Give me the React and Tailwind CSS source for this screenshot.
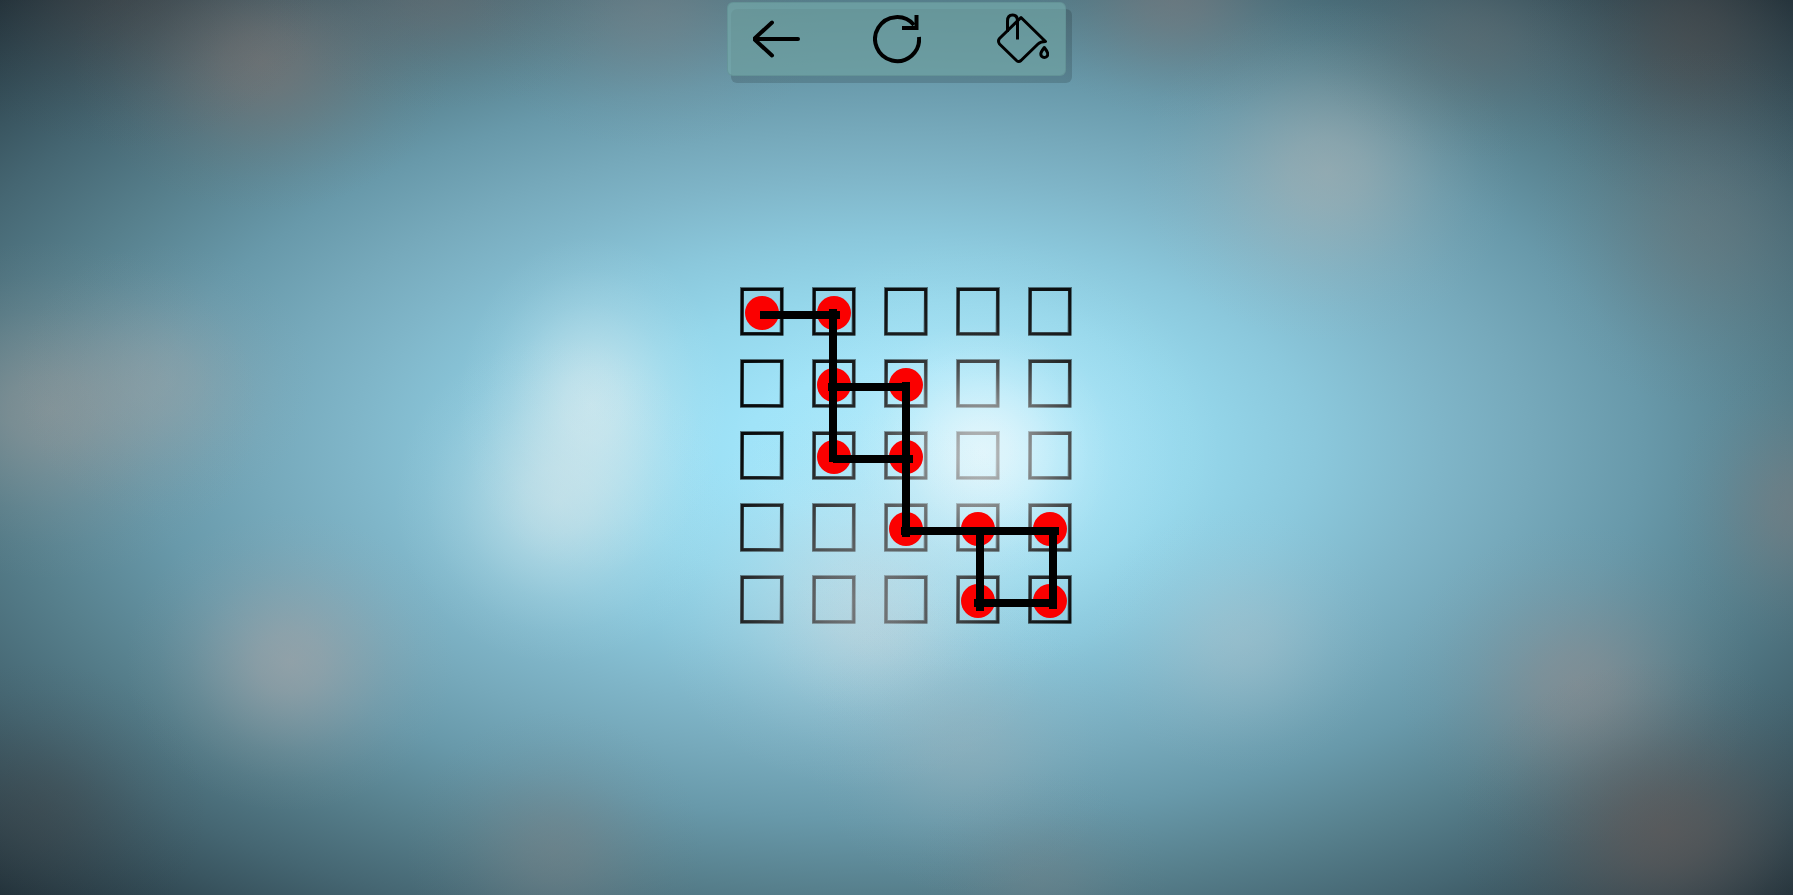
const SIZE = 5;

const GLOWS = [
  { x: 592, y: 405, rx: 135, ry: 170, color: '#e2eef0', a: 0.62 },
  { x: 558, y: 500, rx: 165, ry: 165, color: '#dce8ea', a: 0.56 },
  { x: 983, y: 452, rx: 130, ry: 130, color: '#ffffff', a: 0.6 },
  { x: 975, y: 460, rx: 250, ry: 230, color: '#f0f8fa', a: 0.36 },
  { x: 860, y: 600, rx: 210, ry: 190, color: '#d4dade', a: 0.48 },
  { x: 875, y: 640, rx: 110, ry: 90, color: '#d0d0d2', a: 0.16 },
  { x: 1327, y: 172, rx: 190, ry: 170, color: '#b4b4b2', a: 0.5 },
  { x: 50, y: 410, rx: 210, ry: 170, color: '#a09c9a', a: 0.55 },
  { x: 165, y: 382, rx: 150, ry: 140, color: '#a8a8a8', a: 0.36 },
  { x: 290, y: 662, rx: 165, ry: 150, color: '#aea6a6', a: 0.57 },
  { x: 262, y: 62, rx: 190, ry: 150, color: '#867874', a: 0.56 },
  { x: 120, y: 0, rx: 200, ry: 150, color: '#564c4a', a: 0.35 },
  { x: 440, y: 0, rx: 180, ry: 110, color: '#787070', a: 0.4 },
  { x: 650, y: 10, rx: 180, ry: 140, color: '#848488', a: 0.4 },
  { x: 1175, y: 0, rx: 150, ry: 120, color: '#807a7c', a: 0.5 },
  { x: 1476, y: 40, rx: 170, ry: 120, color: '#686c6e', a: 0.4 },
  { x: 1690, y: 40, rx: 170, ry: 170, color: '#564e4c', a: 0.48 },
  { x: 1702, y: 228, rx: 170, ry: 180, color: '#74787a', a: 0.38 },
  { x: 1793, y: 508, rx: 120, ry: 140, color: '#807e80', a: 0.5 },
  { x: 1578, y: 685, rx: 180, ry: 160, color: '#949092', a: 0.6 },
  { x: 1664, y: 830, rx: 210, ry: 170, color: '#645a58', a: 0.68 },
  { x: 1240, y: 640, rx: 150, ry: 135, color: '#b8c4ca', a: 0.34 },
  { x: 555, y: 850, rx: 150, ry: 140, color: '#808284', a: 0.42 },
  { x: 40, y: 810, rx: 170, ry: 150, color: '#444446', a: 0.36 },
  { x: 965, y: 745, rx: 160, ry: 150, color: '#a4b2b8', a: 0.34 },
  { x: 1040, y: 880, rx: 130, ry: 110, color: '#7e868a', a: 0.3 },
];

const DOTS = [
  [0, 0], [1, 0], [1, 1], [2, 1], [1, 2], [2, 2],
  [2, 3], [3, 3], [4, 3], [3, 4], [4, 4],
];

// x, y, width, height of each connector, in board pixels
const LINKS = [
  [20, 24, 80, 8],
  [89, 22, 8, 153],
  [88, 96, 82, 8],
  [162, 95, 8, 155],
  [93, 168, 80, 8],
  [161, 240, 158, 8],
  [236, 240, 8, 84],
  [309, 240, 8, 82],
  [234, 312, 83, 8],
];

function Backdrop() {
  return (
    <svg className="pointer-events-none absolute inset-0 size-full" viewBox="0 0 1793 895" preserveAspectRatio="none" aria-hidden="true">
      <defs>
        <radialGradient id="sky" cx="50%" cy="50%" r="70.7%">
          <stop offset="0" stopColor="#a2e6fa" />
          <stop offset="0.12" stopColor="#9fe3f8" />
          <stop offset="0.235" stopColor="#95d7eb" />
          <stop offset="0.33" stopColor="#8bc8dc" />
          <stop offset="0.43" stopColor="#7fb5c8" />
          <stop offset="0.5" stopColor="#76a9bb" />
          <stop offset="0.59" stopColor="#6899aa" />
          <stop offset="0.7" stopColor="#57808d" />
          <stop offset="0.81" stopColor="#456672" />
          <stop offset="0.87" stopColor="#3a5661" />
          <stop offset="1" stopColor="#20313a" />
        </radialGradient>
      </defs>
      <rect width="1793" height="895" fill="url(#sky)" />
    </svg>
  );
}

function Glows() {
  return (
    <svg className="pointer-events-none absolute inset-0 z-10 size-full" viewBox="0 0 1793 895" preserveAspectRatio="none" aria-hidden="true">
      <defs>
        {GLOWS.map((g, i) => (
          <radialGradient key={i} id={`glow-${i}`}>
            <stop offset="0" stopColor={g.color} stopOpacity={g.a} />
            <stop offset="0.2" stopColor={g.color} stopOpacity={g.a * 0.84} />
            <stop offset="0.4" stopColor={g.color} stopOpacity={g.a * 0.54} />
            <stop offset="0.6" stopColor={g.color} stopOpacity={g.a * 0.26} />
            <stop offset="0.8" stopColor={g.color} stopOpacity={g.a * 0.08} />
            <stop offset="1" stopColor={g.color} stopOpacity="0" />
          </radialGradient>
        ))}
      </defs>
      {GLOWS.map((g, i) => (
        <ellipse key={i} cx={g.x} cy={g.y} rx={g.rx} ry={g.ry} fill={`url(#glow-${i})`} />
      ))}
    </svg>
  );
}

function Toolbar() {
  return (
    <header className="relative z-20 mt-0.5">
      <div className="absolute -right-1.5 -bottom-[7px] left-1 top-[7px] rounded-md bg-black/15" />
      <div role="toolbar" aria-label="Game controls" className="relative flex gap-[72px] rounded-md border border-[#5f8c90]/60 bg-[#76acac]/65 py-2.5 pr-4 pl-[25px]">
        <button type="button" aria-label="Back" className="cursor-pointer">
          <svg width="48" height="52" viewBox="0 0 48 52" fill="none" stroke="#000" strokeWidth="4" strokeLinecap="round" strokeLinejoin="round">
            <path d="M45 26H1M19 9.500L1 26L19 42.500" />
          </svg>
        </button>
        <button type="button" aria-label="Restart" className="cursor-pointer">
          <svg width="48" height="52" viewBox="0 0 48 52" fill="none" stroke="#000" strokeWidth="4">
            <path d="M46 24A22 22 0 1 1 41 12" />
            <path d="M43.500 2V15H29" />
          </svg>
        </button>
        <button type="button" aria-label="Fill colour" className="cursor-pointer">
          <svg width="56" height="52" viewBox="0 0 56 52" fill="none" stroke="#000" strokeWidth="3" strokeLinejoin="round">
            <path d="M28 4.500L52.500 28.500C49 28.500 47 29 45 31L28 47.500Q25.700 49.500 23.500 47.500L6.500 31Q4.500 28 6.500 25.500Z" />
            <path d="M14.500 19V8Q14.500 2 19.500 2Q24.500 2 24.500 8V26.500" />
            <path d="M51.300 34.500Q47.800 39 47.800 41A3.500 3.500 0 0 0 54.800 41Q54.800 39 51.300 34.500Z" />
          </svg>
        </button>
      </div>
    </header>
  );
}

function Cell({ row, col }) {
  return (
    <button type="button" aria-label={`Row ${row + 1}, column ${col + 1}`} className="h-[49px] w-11 cursor-pointer">
      <svg width="44" height="49" viewBox="0 0 44 49" fill="none" stroke="#000" strokeLinejoin="miter">
        <path d="M2 2L42 2L41.500 47L2 47Z" strokeWidth="4" strokeOpacity="0.5" />
        <path d="M2.300 2.500L41.600 2.300L41.900 46.800L1.900 46.600Z" strokeWidth="2.800" strokeOpacity="0.92" />
      </svg>
    </button>
  );
}

function Board() {
  const cells = Array.from({ length: SIZE * SIZE }, (_, i) => i);
  return (
    <section aria-label="Puzzle board" className="relative mt-[211px] ml-[19px]">
      <div className="grid grid-cols-5 gap-x-7 gap-y-[23px]">
        {cells.map((i) => (
          <Cell key={i} row={Math.floor(i / SIZE)} col={i % SIZE} />
        ))}
      </div>
      <svg className="pointer-events-none absolute inset-0 z-20 size-full" viewBox="0 0 332 337" aria-hidden="true">
        {DOTS.map(([c, r]) => (
          <circle key={`${c}-${r}`} cx={22 + c * 72} cy={26 + r * 72} r="17" fill="#fb0000" />
        ))}
        {LINKS.map(([x, y, w, h], i) => (
          <rect key={i} x={x} y={y} width={w} height={h} fill="#000" />
        ))}
      </svg>
    </section>
  );
}

export default function App() {
  return (
    <main className="relative isolate flex min-h-screen flex-col items-center overflow-hidden bg-[#20313a] font-['Liberation_Sans',sans-serif]">
      <Backdrop />
      <Glows />
      <Toolbar />
      <Board />
    </main>
  );
}
